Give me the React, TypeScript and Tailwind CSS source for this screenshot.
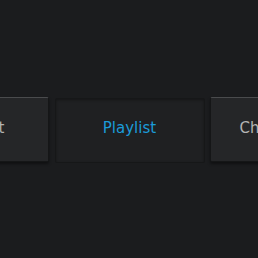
const tabs = [
  { label: "Chromecast", active: false },
  { label: "Playlist", active: true },
  { label: "Connect", active: false },
];

function Tab({ label, active }: { label: string; active: boolean }) {
  if (active) {
    return (
      <div className="ml-[6px] mr-[5px] flex h-[65px] w-[150px] shrink-0 translate-y-[1px] items-center justify-center rounded-[2px] border border-[#161718] bg-[#1f2022] pb-[3px] shadow-[inset_0_1px_3px_rgba(0,0,0,0.35)]">
        <span className="text-[15px] text-[#1b9bd8]">{label}</span>
      </div>
    );
  }
  return (
    <div className="flex h-[65px] w-[150px] shrink-0 items-center justify-center rounded-[2px] border border-[#151617] border-t-[#4a4b4d] bg-[#252628] pb-[2px] shadow-[0_2px_3px_rgba(0,0,0,0.45)]">
      <span className="text-[15px] text-[#b3b3b3]">{label}</span>
    </div>
  );
}

export default function App() {
  // carousel, centre item selected
  const order = [tabs[2], tabs[1], tabs[0]];
  return (
    <div
      className="flex h-screen w-screen items-center justify-center overflow-hidden bg-[#1b1c1e]"
      style={{ fontFamily: '"DejaVu Sans", sans-serif' }}
    >
      {order.map((t) => (
        <Tab key={t.label} {...t} />
      ))}
    </div>
  );
}
